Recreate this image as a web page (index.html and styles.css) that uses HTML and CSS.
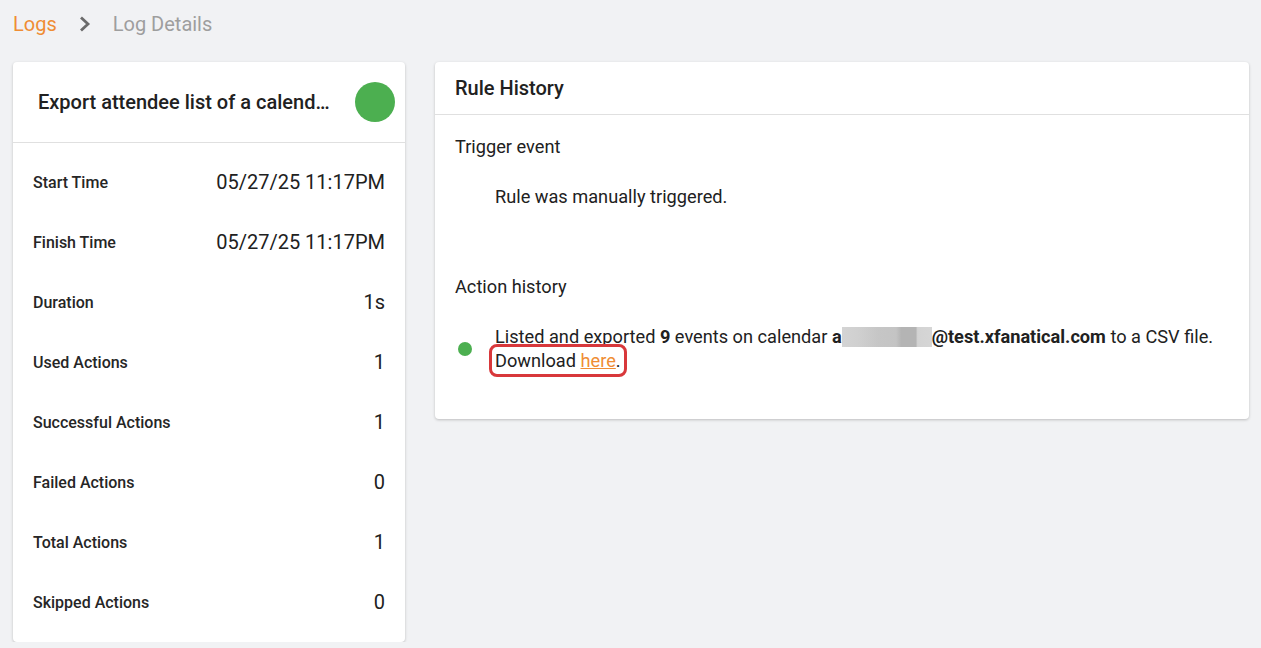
FILE: index.html
```html
<!DOCTYPE html>
<html>
<head>
  <title>Log Details</title>
  <link rel="stylesheet" href="styles.css">
</head>
<body>

  <div class="breadcrumb">
    <a class="crumb-link" href="#">Logs</a>
    <svg class="crumb-sep" width="14" height="16" viewBox="0 0 14 16">
      <polyline points="3,1.5 10,8 3,14.5" fill="none" stroke="#6b6b6b" stroke-width="2.8"/>
    </svg>
    <span class="crumb-current">Log Details</span>
  </div>

  <div class="layout">
    <div class="card summary">
      <div class="summary-head">
        <div class="summary-title">Export attendee list of a calendar to a CSV file</div>
        <div class="status-dot"></div>
      </div>
      <div class="summary-rows">
        <div class="row"><span class="label">Start Time</span><span class="value">05/27/25 11:17PM</span></div>
        <div class="row"><span class="label">Finish Time</span><span class="value">05/27/25 11:17PM</span></div>
        <div class="row"><span class="label">Duration</span><span class="value">1s</span></div>
        <div class="row"><span class="label">Used Actions</span><span class="value">1</span></div>
        <div class="row"><span class="label">Successful Actions</span><span class="value">1</span></div>
        <div class="row"><span class="label">Failed Actions</span><span class="value">0</span></div>
        <div class="row"><span class="label">Total Actions</span><span class="value">1</span></div>
        <div class="row"><span class="label">Skipped Actions</span><span class="value">0</span></div>
      </div>
    </div>

    <div class="card history">
      <div class="history-head">Rule History</div>
      <div class="history-body">
        <div class="section-title">Trigger event</div>
        <div class="trigger-text">Rule was manually triggered.</div>

        <div class="section-title action-title">Action history</div>
        <div class="action-item">
          <div class="dot-wrap"><span class="action-dot"></span></div>
          <div class="action-text">
            Listed and exported <b>9</b> events on calendar <b>a</b><span class="redacted"></span><b>@test.xfanatical.com</b> to a CSV file.
            <span class="highlight">Download <a class="file-link" href="#">here</a>.</span>
          </div>
        </div>
      </div>
    </div>
  </div>

</body>
</html>
```

FILE: styles.css
```css
body {
  margin: 0;
  padding: 0 12px 0 13px;
  background: #f1f2f4;
  font-family: Roboto, 'Liberation Sans', sans-serif;
  color: #212121;
}

.breadcrumb {
  display: flex;
  align-items: center;
  height: 48px;
  font-size: 20px;
}

.crumb-link {
  color: #ef8d34;
  text-decoration: none;
}

.crumb-sep {
  margin: 0 21px 0 21px;
}

.crumb-current {
  color: #9e9e9e;
}

.layout {
  display: flex;
  align-items: flex-start;
  gap: 30px;
  margin-top: 14px;
}

.card {
  background: #fff;
  border-radius: 4px;
  box-shadow: 0 1px 3px rgba(0,0,0,0.22);
}

.summary {
  width: 392px;
  flex-shrink: 0;
}

.summary-head {
  display: flex;
  align-items: center;
  gap: 22px;
  height: 80px;
  padding: 0 10px 0 25px;
  border-bottom: 1px solid #e0e0e0;
}

.summary-title {
  flex: 1;
  min-width: 0;
  font-size: 20px;
  font-weight: 500;
  white-space: nowrap;
  overflow: hidden;
  text-overflow: ellipsis;
}

.status-dot {
  width: 40px;
  height: 40px;
  border-radius: 50%;
  background: #4caf50;
  flex-shrink: 0;
}

.summary-rows {
  padding: 9px 20px 10px 20px;
}

.row {
  display: flex;
  align-items: center;
  justify-content: space-between;
  height: 60px;
}

.label {
  font-size: 16px;
  font-weight: 500;
  color: #262626;
}

.value {
  font-size: 20px;
}

.history {
  flex: 1;
}

.history-head {
  height: 52px;
  display: flex;
  align-items: center;
  padding: 0 20px;
  font-size: 20px;
  font-weight: 500;
  border-bottom: 1px solid #e0e0e0;
}

.history-body {
  padding: 20px 20px 46px 20px;
  font-size: 18.2px;
  line-height: 24px;
}

.trigger-text {
  margin-top: 26px;
  padding-left: 40px;
}

.action-title {
  margin-top: 66px;
}

.action-item {
  display: flex;
  align-items: center;
  margin-top: 26px;
}

.dot-wrap {
  width: 40px;
  flex-shrink: 0;
}

.action-dot {
  display: block;
  width: 14px;
  height: 14px;
  margin-left: 3px;
  border-radius: 50%;
  background: #4caf50;
}

.action-text b {
  font-weight: 700;
}

.redacted {
  display: inline-block;
  width: 90px;
  height: 20px;
  vertical-align: -4px;
  background: linear-gradient(90deg, #d4d4d4 0%, #cfcfcf 20%, #c6c6c6 40%, #c4c4c4 60%, #b4b4b4 66%, #b4b4b4 82%, #d3d3d3 84%, #d6d6d6 100%);
}

.highlight {
  outline: 3px solid #d8383b;
  outline-offset: 3px;
  border-radius: 2px;
}

.file-link {
  color: #ef8d34;
  text-decoration: underline;
}
```
